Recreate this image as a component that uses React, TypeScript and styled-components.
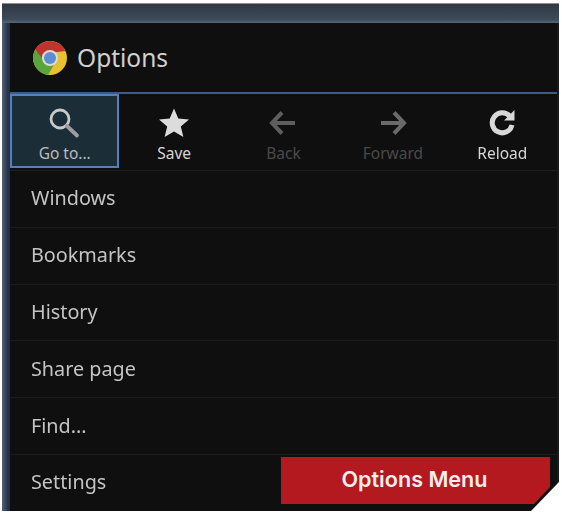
import React from "react";
import styled, { createGlobalStyle } from "styled-components";

const Global = createGlobalStyle`
  html, body { margin: 0; padding: 0; background: #fff; }
  body { width: 562px; height: 514px; overflow: hidden; font-family: "Noto Sans", "Open Sans", sans-serif; }
`;

const Page = styled.div`
  width: 562px;
  height: 514px;
  padding: 3px 3px 3px 2px;
  box-sizing: border-box;
  background: #fff;
`;

const Frame = styled.div`
  position: relative;
  height: 508px;
  display: flex;
  flex-direction: column;
  background: #1a1a1c;
  border-top: 1px solid #8b8d90;
  box-sizing: border-box;
  clip-path: polygon(0 0, 100% 0, 100% 479px, 529px 100%, 0 100%);
  filter: blur(0.6px);
`;

const TopBar = styled.div`
  height: 19px;
  flex: none;
  background: linear-gradient(#2f3944, #3d4a58 80%, #55677a);
`;

const Body = styled.div`
  flex: 1;
  min-height: 0;
  display: flex;
`;

const SideStrip = styled.div`
  width: 8px;
  flex: none;
  background: linear-gradient(90deg, #5a626e, #2c3a55 60%, #232c40);
`;

const Panel = styled.div`
  flex: 1;
  min-width: 0;
  display: flex;
  flex-direction: column;
  background: #0f0f10;
  margin-right: 2px;
`;

const Header = styled.div`
  height: 71px;
  flex: none;
  display: flex;
  align-items: center;
  gap: 9px;
  padding-left: 22px;
  box-sizing: border-box;
  border-bottom: 2px solid #3d5a86;
`;

const HeaderTitle = styled.div`
  color: #d0d0d0;
  font-size: 24.5px;
  line-height: 30px;
`;

const Toolbar = styled.div`
  height: 76px;
  flex: none;
  display: grid;
  grid-template-columns: repeat(5, 1fr);
  border-bottom: 1px solid #1c1c1c;
`;

const ToolItem = styled.div<{ $active?: boolean; $dim?: boolean }>`
  display: flex;
  flex-direction: column;
  align-items: center;
  box-sizing: border-box;
  padding-top: ${(p) => (p.$active ? "11px" : "13px")};
  height: ${(p) => (p.$active ? "74px" : "76px")};
  background: ${(p) => (p.$active ? "#1b2d36" : "transparent")};
  border: ${(p) => (p.$active ? "2px solid #5580bd" : "0 solid transparent")};
  color: ${(p) => (p.$dim ? "#4a4a4a" : p.$active ? "#bcbcbc" : "#d6d6d6")};
`;

const ToolIcon = styled.svg`
  width: 32px;
  height: 32px;
  display: block;
`;

const ToolLabel = styled.div`
  font-size: 15.5px;
  line-height: 18px;
  margin-top: 5px;
  white-space: nowrap;
`;

const Menu = styled.div`
  flex: 1;
  display: flex;
  flex-direction: column;
`;

const MenuRow = styled.div`
  height: 56.8px;
  flex: none;
  box-sizing: border-box;
  display: flex;
  align-items: center;
  padding: 0 0 2px 21px;
  color: #c4c4c4;
  font-size: 19.8px;
  border-bottom: 1px solid #1b1b1b;
`;

const Badge = styled.div`
  position: absolute;
  left: 279px;
  top: 453px;
  width: 269px;
  height: 47px;
  background: #b3191e;
  color: #f6eeee;
  display: flex;
  align-items: center;
  justify-content: center;
  font-family: "Inter", "Liberation Sans", sans-serif;
  font-weight: 600;
  font-size: 21.6px;
  clip-path: polygon(0 0, 100% 0, 100% 30px, 253px 100%, 0 100%);
  padding: 0 2px 4px 0;
  box-sizing: border-box;
`;

const Chrome = () => (
  <svg width="36" height="36" viewBox="-18 -18 36 36" aria-hidden="true">
    <circle r="17" fill="#e8c030" />
    <path d="M0 -17 A17 17 0 0 0 -14.7 -8.5 L-8 4 L-7.5 -4 L15.4 -7 A17 17 0 0 0 0 -17Z" fill="#c0342e" />
    <path d="M-14.7 -8.5 A17 17 0 0 0 -2 16.9 L5 5 L-5 5 L-9 -1Z" fill="#5aa53a" />
    <circle r="8" fill="#dcdcdc" />
    <circle r="6" fill="#5b8fd0" />
  </svg>
);

const items = ["Windows", "Bookmarks", "History", "Share page", "Find...", "Settings"];

export default function App() {
  return (
    <Page>
      <Global />
      <Frame>
        <TopBar />
        <Body>
          <SideStrip />
          <Panel>
            <Header>
              <Chrome />
              <HeaderTitle>Options</HeaderTitle>
            </Header>
            <Toolbar>
              <ToolItem $active>
                <ToolIcon viewBox="0 0 32 32" fill="none" stroke="#c9c9c9">
                  <circle cx="11" cy="12" r="9" strokeWidth="2.8" />
                  <path d="M18 19 L28 28.5" strokeWidth="3.8" strokeLinecap="round" stroke="#9d9d9d" />
                </ToolIcon>
                <ToolLabel>Go to...</ToolLabel>
              </ToolItem>
              <ToolItem>
                <ToolIcon viewBox="0 0 32 32">
                  <path d="M16 1.5 L20.3 11.6 L31 12.4 L22.8 19.4 L25.4 30 L16 24.4 L6.6 30 L9.2 19.4 L1 12.4 L11.7 11.6Z" fill="#dcdcdc" />
                </ToolIcon>
                <ToolLabel>Save</ToolLabel>
              </ToolItem>
              <ToolItem $dim>
                <ToolIcon viewBox="0 0 32 32" fill="none" stroke="#5e5e5e" strokeWidth="4">
                  <path d="M5 16 H28" />
                  <path d="M15 5.5 L5 16 L15 26.5" />
                </ToolIcon>
                <ToolLabel>Back</ToolLabel>
              </ToolItem>
              <ToolItem $dim>
                <ToolIcon viewBox="0 0 32 32" fill="none" stroke="#6a6a6a" strokeWidth="4">
                  <path d="M4 16 H27" />
                  <path d="M17 5.5 L27 16 L17 26.5" />
                </ToolIcon>
                <ToolLabel>Forward</ToolLabel>
              </ToolItem>
              <ToolItem>
                <ToolIcon viewBox="0 0 32 32" fill="none">
                  <path d="M24 9.5 A10 10 0 1 0 26 18" stroke="#d8d8d8" strokeWidth="5" />
                  <path d="M18 13.5 L28.5 13.5 L28.5 3Z" fill="#d8d8d8" />
                </ToolIcon>
                <ToolLabel>Reload</ToolLabel>
              </ToolItem>
            </Toolbar>
            <Menu>
              {items.map((t) => (
                <MenuRow key={t}>{t}</MenuRow>
              ))}
            </Menu>
          </Panel>
        </Body>
        <Badge>Options Menu</Badge>
      </Frame>
    </Page>
  );
}
